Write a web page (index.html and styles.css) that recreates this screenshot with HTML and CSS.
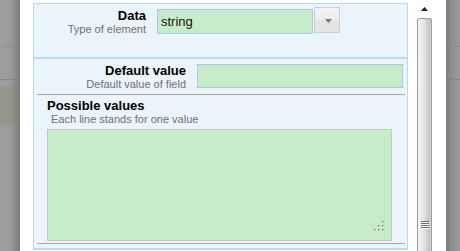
FILE: index.html
```html
<!DOCTYPE html>
<html>
<head>
<meta charset="utf-8">
<link rel="stylesheet" href="styles.css">
</head>
<body>
<div class="screen">
  <div class="backdrop backdrop-left">
    <div class="bd-top"><div class="bd-dash"></div></div>
    <div class="bd-line"></div>
    <div class="bd-gap"></div>
    <div class="bd-olive"></div>
  </div>

  <div class="dialog">
    <div class="panel">
      <div class="row row-data">
        <div class="label label-data">
          <div class="title">Data</div>
          <div class="sub">Type of element</div>
        </div>
        <div class="input input-data">string</div>
        <div class="dd-btn">
          <svg width="7" height="4" viewBox="0 0 7 4"><path d="M0 0H7L3.5 4Z" fill="#777"/></svg>
        </div>
      </div>

      <div class="row row-default">
        <div class="label label-default">
          <div class="title">Default value</div>
          <div class="sub">Default value of field</div>
        </div>
        <div class="input input-default"></div>
      </div>

      <div class="rule"></div>

      <div class="row-possible">
        <div class="title">Possible values</div>
        <div class="sub sub-indent">Each line stands for one value</div>
        <div class="textarea">
          <svg class="resize-grip" width="11" height="11" viewBox="0 0 11 11">
            <rect x="8" y="0" width="2" height="2" fill="#8c9a8c"/>
            <rect x="4" y="4" width="2" height="2" fill="#8c9a8c"/>
            <rect x="8" y="4" width="2" height="2" fill="#8c9a8c"/>
            <rect x="0" y="8" width="2" height="2" fill="#8c9a8c"/>
            <rect x="4" y="8" width="2" height="2" fill="#8c9a8c"/>
            <rect x="8" y="8" width="2" height="2" fill="#8c9a8c"/>
            <rect x="9" y="1" width="1" height="1" fill="#f4fff4"/>
            <rect x="5" y="5" width="1" height="1" fill="#f4fff4"/>
            <rect x="9" y="5" width="1" height="1" fill="#f4fff4"/>
            <rect x="1" y="9" width="1" height="1" fill="#f4fff4"/>
            <rect x="5" y="9" width="1" height="1" fill="#f4fff4"/>
            <rect x="9" y="9" width="1" height="1" fill="#f4fff4"/>
          </svg>
        </div>
      </div>

      <div class="rule"></div>
      <div class="row-sep"></div>
    </div>

    <div class="scrollbar">
      <div class="sb-up">
        <svg width="7" height="4" viewBox="0 0 7 4"><path d="M3.5 0L7 4H0Z" fill="#222"/></svg>
      </div>
      <div class="sb-thumb">
        <div class="sb-grip">
          <span></span><span></span><span></span><span></span>
        </div>
      </div>
    </div>
  </div>

  <div class="backdrop backdrop-right">
    <div class="bd-top"><div class="bd-dash"></div></div>
    <div class="bd-line"></div>
  </div>
</div>
</body>
</html>
```

FILE: styles.css
```css
* {
  box-sizing: border-box;
}

html, body {
  margin: 0;
  padding: 0;
  background: #fff;
}

body {
  font-family: "Liberation Sans", Arial, sans-serif;
}

.screen {
  display: flex;
  width: 460px;
  height: 251px;
  overflow: hidden;
}

/* ---------- backdrop (dimmed page) ---------- */
.backdrop {
  flex-shrink: 0;
  display: flex;
  flex-direction: column;
  overflow: hidden;
}

.backdrop-left {
  width: 20px;
  background: linear-gradient(to right, #9e9e9e 0%, #9a9a9a 55%, #7b7b7b 100%);
}

.backdrop-right {
  width: 14px;
  background: linear-gradient(to right, #7b7b7b 0%, #909090 45%, #9c9c9c 100%);
}

.bd-top {
  height: 79px;
  padding-top: 46px;
}

.bd-dash {
  height: 0;
  border-top: 1px dashed #858585;
  margin-left: 2px;
}

.backdrop-right .bd-dash {
  margin-left: 3px;
}

.bd-line {
  height: 1px;
  background: #858585;
}

.bd-gap {
  height: 6px;
}

.bd-olive {
  height: 39px;
  background: linear-gradient(to right, #98988f 0%, #95958c 55%, #7c7c76 100%);
}

/* ---------- dialog ---------- */
.dialog {
  flex-shrink: 0;
  width: 426px;
  display: flex;
  align-items: flex-start;
  gap: 9px;
  padding: 0 14px 0 13px;
  background: #fff;
}

.panel {
  flex-shrink: 0;
  width: 375px;
  margin-top: 3px;
  background: #ebf3fb;
  border: 1px solid #b8d8f0;
  border-bottom: none;
}

.row {
  display: flex;
  align-items: flex-start;
}

.row-data {
  height: 55px;
  border-bottom: 2px solid #b7dbf2;
}

.row-default {
  height: 35px;
}

.label {
  flex-shrink: 0;
  text-align: right;
  padding-top: 5px;
}

.label-data {
  width: 112px;
}

.label-default {
  width: 152px;
}

.title {
  font-size: 13px;
  line-height: 13px;
  font-weight: bold;
  color: #000;
  white-space: nowrap;
}

.sub {
  font-size: 11px;
  line-height: 14px;
  color: #707070;
  white-space: nowrap;
}

.input {
  flex-shrink: 0;
  margin-left: 11px;
  margin-top: 5px;
  background: #c8ecca;
  border: 1px solid #a6cbe4;
  font-size: 13px;
  color: #111;
}

.input-data {
  width: 156px;
  height: 25px;
  line-height: 23px;
  padding-left: 3px;
}

.input-default {
  width: 206px;
  height: 24px;
}

.dd-btn {
  flex-shrink: 0;
  width: 26px;
  height: 26px;
  margin-left: 1px;
  margin-top: 3px;
  border: 1px solid #cdcdcd;
  background: linear-gradient(#f1f1f1 0%, #eeeeee 48%, #e4e4e4 52%, #e4e4e4 100%);
  display: flex;
  align-items: center;
  justify-content: center;
  padding-left: 3px;
  padding-top: 1px;
}

.dd-btn svg {
  display: block;
}

.rule {
  height: 1px;
  background: #a7a7a7;
  margin: 0 2px 0 3px;
}

.row-possible {
  padding: 4px 0 2px 13px;
}

.sub-indent {
  padding-left: 4px;
}

.textarea {
  position: relative;
  margin-top: 3px;
  width: 345px;
  height: 112px;
  background: #c8ecca;
  border: 1px solid #c6c6c6;
}

.resize-grip {
  position: absolute;
  right: 6px;
  bottom: 8px;
  display: block;
}

.row-sep {
  margin-top: 4px;
  height: 2px;
  background: #b7dbf2;
}

/* ---------- scrollbar ---------- */
.scrollbar {
  flex-shrink: 0;
  width: 15px;
  height: 251px;
  display: flex;
  flex-direction: column;
}

.sb-up {
  height: 18px;
  display: flex;
  justify-content: center;
  padding-top: 7px;
}

.sb-up svg {
  display: block;
}

.sb-thumb {
  flex: 1;
  border: 1px solid #9c9c9c;
  border-bottom: none;
  border-radius: 3px 3px 0 0;
  background: linear-gradient(to right, #f6f6f6 0%, #ececec 25%, #e2e2e2 50%, #cbcbcb 75%, #c6c6c6 88%, #dadada 100%);
  padding-top: 202px;
  display: flex;
  justify-content: center;
}

.sb-grip {
  width: 8px;
  display: flex;
  flex-direction: column;
  gap: 1px;
}

.sb-grip span {
  display: block;
  height: 1px;
  background: #6a6a6a;
  box-shadow: 0 1px 0 #fafafa;
}
```
